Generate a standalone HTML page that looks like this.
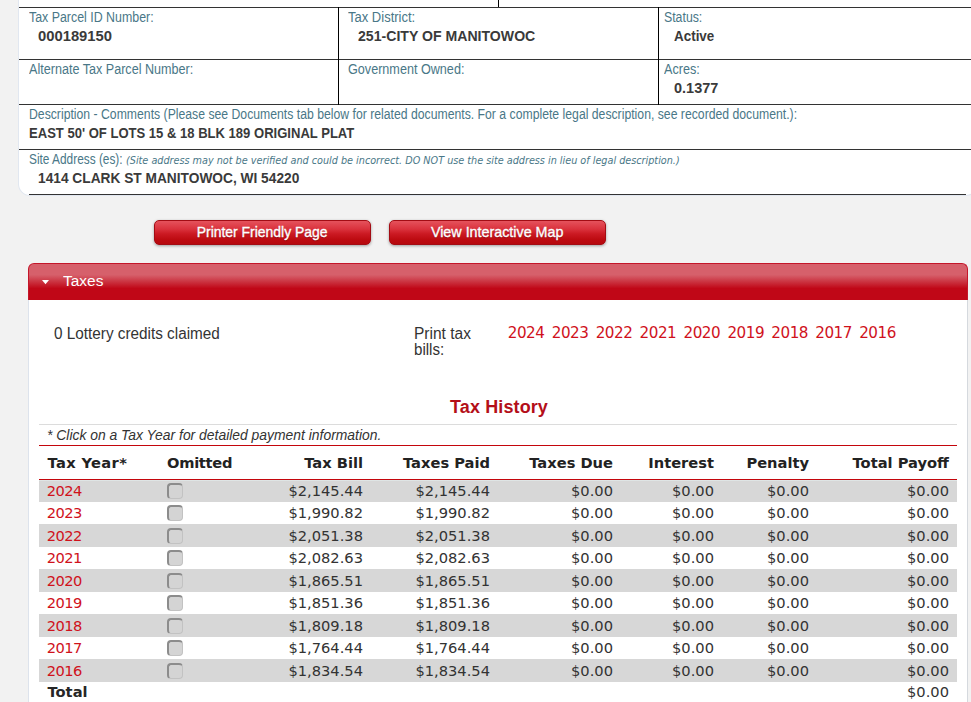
<!DOCTYPE html>
<html lang="en">
<head>
<meta charset="utf-8">
<title>Tax Parcel Detail</title>
<style>
*{box-sizing:border-box;margin:0;padding:0}
html,body{width:971px;height:702px;overflow:hidden}
body{background:#f2f2f2;font-family:"Liberation Sans",sans-serif;color:#333;position:relative}
.abs{position:absolute;white-space:nowrap}
.sx{display:inline-block;transform-origin:0 50%;white-space:nowrap}

/* parcel info box */
#info{position:absolute;left:18px;top:-10px;width:960px;height:206px;background:#fff;border:1px solid #e1e7f0;border-top:none;border-radius:0 0 12px 12px}
.hl{position:absolute;left:19px;width:952px;height:1px;background:#333}
.vl{position:absolute;width:1px;background:#000}
.lbl{position:absolute;margin-left:-.3px;white-space:nowrap;color:#497787;font-size:14px;line-height:16px}
.val{position:absolute;margin-left:-.3px;white-space:nowrap;color:#3a3a3a;font-size:15px;line-height:18px;font-weight:bold}
.note{font-family:"DejaVu Sans","Liberation Sans",sans-serif;font-style:italic;font-size:10.5px}

/* buttons */
.btn{position:absolute;top:220px;height:25px;border-radius:5px;border:1px solid #a30c14;background:linear-gradient(#e5525c 0%,#da323d 35%,#cc1a23 55%,#bd0b11 80%,#b6090e 100%);color:#fff;font-size:14.5px;line-height:23px;text-align:center;box-shadow:0 1px 3px rgba(0,0,0,.35);text-shadow:0 1px 1px rgba(0,0,0,.3);font-weight:normal;-webkit-text-stroke:0.35px #fff}

/* taxes panel */
#thead{position:absolute;left:28px;top:263px;width:940px;height:37px;border-radius:6px 6px 0 0;border:1px solid #c4162a;border-bottom:none;background:linear-gradient(#d6606b 0%,#d6606b 30%,#c00717 68%,#c00717 100%)}
#tbody{position:absolute;left:28px;top:300px;width:940px;height:410px;background:#fff;border-right:1px solid #d5d9de;border-left:1px solid #dde3ec}
.tri{position:absolute;left:42px;top:280px;width:0;height:0;border-left:3.5px solid transparent;border-right:3.5px solid transparent;border-top:4px solid #fff}
.lato15{font-size:16px;line-height:16px;color:#333}
.yr{font-family:"DejaVu Sans","Liberation Sans",sans-serif;font-size:15.2px;letter-spacing:-.5px;color:#d0121c}
#th{position:absolute;left:1px;top:396px;width:996px;text-align:center;font-weight:bold;font-size:18px;line-height:22px;letter-spacing:.12px;color:#b40f19}
.grid{font-family:"DejaVu Sans","Liberation Sans",sans-serif;font-size:14.667px;line-height:22.5px;color:#333}
.row{position:absolute;left:39px;width:918px;height:22.5px}
.row.g{background:#d7d7d7}
.row span{position:absolute;top:.35px;white-space:nowrap}
.c1{left:7.8px;color:#d0121c;letter-spacing:-.6px}
.r3{right:594px}.r4{right:467px}.r5{right:344px}.r6{right:243px}.r7{right:148px}.r8{right:8px}
.hd{font-weight:bold;color:#222}
.cb{position:absolute;left:128px;top:3.4px;width:16px;height:16px;border:1px solid #c2c2c2;border-left:2px solid #8c8c8c;border-top:2px solid #8c8c8c;border-radius:4px;background:#d4d4d4}
</style>
</head>
<body>

<div id="info"></div>
<div class="vl" style="left:498px;top:0;height:7px"></div>
<div class="hl" style="top:7px"></div>
<div class="hl" style="top:59px"></div>
<div class="hl" style="top:104px"></div>
<div class="hl" style="top:149px"></div>
<div class="hl" style="top:194px;left:29px;width:937px"></div>
<div class="vl" style="left:338px;top:7px;height:98px"></div>
<div class="vl" style="left:658px;top:7px;height:98px"></div>

<div class="lbl" style="left:29px;top:9px"><span class="sx" id="l1" style="transform:scaleX(0.8848);">Tax Parcel ID Number:</span></div>
<div class="val" style="left:38px;top:27px"><span class="sx" id="v1" style="transform:scaleX(0.9854);">000189150</span></div>
<div class="lbl" style="left:348px;top:9px"><span class="sx" id="l2" style="transform:scaleX(0.9289);">Tax District:</span></div>
<div class="val" style="left:358px;top:27px"><span class="sx" id="v2" style="transform:scaleX(0.9399);">251-CITY OF MANITOWOC</span></div>
<div class="lbl" style="left:664px;top:9px"><span class="sx" id="l3" style="transform:scaleX(0.8786);">Status:</span></div>
<div class="val" style="left:674px;top:27px"><span class="sx" id="v3" style="transform:scaleX(0.8949);">Active</span></div>

<div class="lbl" style="left:29px;top:61px"><span class="sx" id="l4" style="transform:scaleX(0.8992);">Alternate Tax Parcel Number:</span></div>
<div class="lbl" style="left:348px;top:61px"><span class="sx" id="l5" style="transform:scaleX(0.9011);">Government Owned:</span></div>
<div class="lbl" style="left:664px;top:61px"><span class="sx" id="l6" style="transform:scaleX(0.9020);">Acres:</span></div>
<div class="val" style="left:674px;top:79px"><span class="sx" id="v6" style="transform:scaleX(0.9653);">0.1377</span></div>

<div class="lbl" style="left:29px;top:106px"><span class="sx" id="l7" style="transform:scaleX(0.8735);">Description - Comments (Please see Documents tab below for related documents. For a complete legal description, see recorded document.):</span></div>
<div class="val" style="left:29px;top:124px"><span class="sx" id="v7" style="transform:scaleX(0.8699);">EAST 50' OF LOTS 15 &amp; 18 BLK 189 ORIGINAL PLAT</span></div>

<div class="lbl" style="left:29px;top:151px"><span class="sx" id="l8" style="transform:scaleX(0.8471);">Site Address (es):</span></div>
<div class="lbl note" style="left:126px;top:152px"><span class="sx" id="l9" style="transform:scaleX(0.9199);">(Site address may not be verified and could be incorrect. DO NOT use the site address in lieu of legal description.)</span></div>
<div class="val" style="left:38px;top:169px"><span class="sx" id="v8" style="transform:scaleX(0.9148);">1414 CLARK ST MANITOWOC, WI 54220</span></div>

<div class="btn" style="left:154px;width:217px"><span class="sx" id="b1" style="transform:scaleX(0.9603);transform-origin:50% 50%">Printer Friendly Page</span></div>
<div class="btn" style="left:389px;width:217px"><span class="sx" id="b2" style="transform:scaleX(0.9864);transform-origin:50% 50%">View Interactive Map</span></div>

<div id="thead"></div>
<div id="tbody"></div>
<svg class="abs" style="left:41px;top:279px" width="10" height="7" viewBox="0 0 10 7"><polygon points="1,1 8,1 4.5,5.2" fill="#fff"/></svg>
<div class="abs" style="left:63px;top:272px;color:#fff;font-size:15.4px;line-height:18px"><span class="sx" id="t1" style="transform:scaleX(1.0045);">Taxes</span></div>

<div class="abs lato15" style="left:53.5px;top:326px"><span class="sx" id="p1" style="transform:scaleX(0.9561);">0 Lottery credits claimed</span></div>
<div class="abs lato15" style="left:413.5px;top:326px"><span class="sx" id="p2" style="transform:scaleX(0.9695);">Print tax</span></div>
<div class="abs lato15" style="left:413.5px;top:342px"><span class="sx" id="p3" style="transform:scaleX(0.9433);">bills:</span></div>
<div class="abs yr" style="left:507.8px;top:324px;line-height:18px" id="yrs"><span style="display:inline-block;width:43.93px">2024</span><span style="display:inline-block;width:43.93px">2023</span><span style="display:inline-block;width:43.93px">2022</span><span style="display:inline-block;width:43.93px">2021</span><span style="display:inline-block;width:43.93px">2020</span><span style="display:inline-block;width:43.93px">2019</span><span style="display:inline-block;width:43.93px">2018</span><span style="display:inline-block;width:43.93px">2017</span><span style="display:inline-block;width:43.93px">2016</span></div>

<div id="th">Tax History</div>
<div class="abs" style="left:39px;top:424px;width:918px;height:1px;background:#dcdcdc"></div>
<div class="abs" style="left:47px;top:427px;font-style:italic;font-size:13.9px;line-height:16px;color:#333" id="n1">* Click on a Tax Year for detailed payment information.</div>
<div class="abs" style="left:39px;top:445px;width:918px;height:1px;background:#c4060c"></div>

<div class="row grid hd" style="top:452px"><span style="left:8.5px;letter-spacing:.35px">Tax Year*</span><span style="left:128px;letter-spacing:-.3px">Omitted</span><span class="r3">Tax Bill</span><span class="r4">Taxes Paid</span><span class="r5">Taxes Due</span><span class="r6">Interest</span><span class="r7">Penalty</span><span class="r8">Total Payoff</span></div>
<div class="abs" style="left:39px;top:479px;width:918px;height:1px;background:#c4060c;z-index:3"></div>

<div class="abs" style="left:39px;top:480px;width:918px;height:1px;background:#dfe5e5;z-index:3"></div>
<div class="row grid g" style="top:479.4px"><span class="c1">2024</span><i class="cb"></i><span class="r3">$2,145.44</span><span class="r4">$2,145.44</span><span class="r5">$0.00</span><span class="r6">$0.00</span><span class="r7">$0.00</span><span class="r8">$0.00</span></div>
<div class="row grid" style="top:501.9px"><span class="c1">2023</span><i class="cb"></i><span class="r3">$1,990.82</span><span class="r4">$1,990.82</span><span class="r5">$0.00</span><span class="r6">$0.00</span><span class="r7">$0.00</span><span class="r8">$0.00</span></div>
<div class="row grid g" style="top:524.4px"><span class="c1">2022</span><i class="cb"></i><span class="r3">$2,051.38</span><span class="r4">$2,051.38</span><span class="r5">$0.00</span><span class="r6">$0.00</span><span class="r7">$0.00</span><span class="r8">$0.00</span></div>
<div class="row grid" style="top:546.9px"><span class="c1">2021</span><i class="cb"></i><span class="r3">$2,082.63</span><span class="r4">$2,082.63</span><span class="r5">$0.00</span><span class="r6">$0.00</span><span class="r7">$0.00</span><span class="r8">$0.00</span></div>
<div class="row grid g" style="top:569.4px"><span class="c1">2020</span><i class="cb"></i><span class="r3">$1,865.51</span><span class="r4">$1,865.51</span><span class="r5">$0.00</span><span class="r6">$0.00</span><span class="r7">$0.00</span><span class="r8">$0.00</span></div>
<div class="row grid" style="top:591.9px"><span class="c1">2019</span><i class="cb"></i><span class="r3">$1,851.36</span><span class="r4">$1,851.36</span><span class="r5">$0.00</span><span class="r6">$0.00</span><span class="r7">$0.00</span><span class="r8">$0.00</span></div>
<div class="row grid g" style="top:614.4px"><span class="c1">2018</span><i class="cb"></i><span class="r3">$1,809.18</span><span class="r4">$1,809.18</span><span class="r5">$0.00</span><span class="r6">$0.00</span><span class="r7">$0.00</span><span class="r8">$0.00</span></div>
<div class="row grid" style="top:636.9px"><span class="c1">2017</span><i class="cb"></i><span class="r3">$1,764.44</span><span class="r4">$1,764.44</span><span class="r5">$0.00</span><span class="r6">$0.00</span><span class="r7">$0.00</span><span class="r8">$0.00</span></div>
<div class="row grid g" style="top:659.4px"><span class="c1">2016</span><i class="cb"></i><span class="r3">$1,834.54</span><span class="r4">$1,834.54</span><span class="r5">$0.00</span><span class="r6">$0.00</span><span class="r7">$0.00</span><span class="r8">$0.00</span></div>
<div class="row grid" style="top:680.6px"><span style="left:8.5px;font-weight:bold;color:#262626">Total</span><span class="r8">$0.00</span></div>

</body>
</html>
